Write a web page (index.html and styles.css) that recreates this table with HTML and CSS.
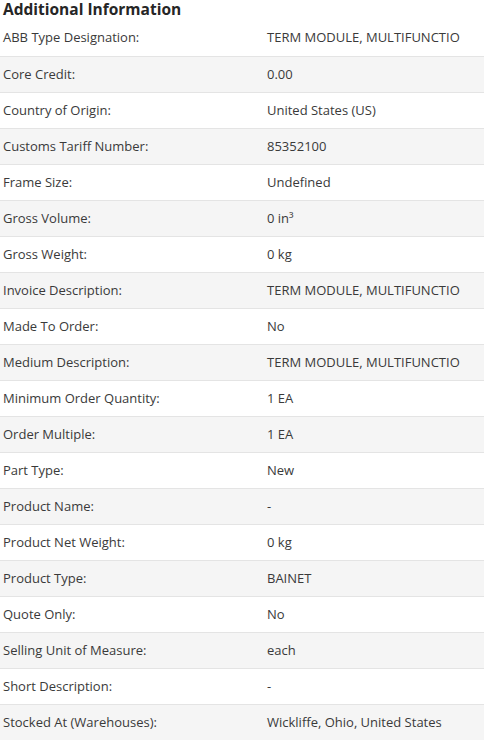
FILE: index.html
```html
<!DOCTYPE html>
<html>
<head>
<meta charset="utf-8">
<link rel="stylesheet" href="styles.css">
</head>
<body>
<div class="info">
  <h2 class="title">Additional Information</h2>
  <div class="table">
    <div class="row"><span class="label">ABB Type Designation:</span><span class="value">TERM MODULE, MULTIFUNCTIO</span></div>
    <div class="row alt"><span class="label">Core Credit:</span><span class="value">0.00</span></div>
    <div class="row"><span class="label">Country of Origin:</span><span class="value">United States (US)</span></div>
    <div class="row alt"><span class="label">Customs Tariff Number:</span><span class="value">85352100</span></div>
    <div class="row"><span class="label">Frame Size:</span><span class="value">Undefined</span></div>
    <div class="row alt"><span class="label">Gross Volume:</span><span class="value">0 in³</span></div>
    <div class="row"><span class="label">Gross Weight:</span><span class="value">0 kg</span></div>
    <div class="row alt"><span class="label">Invoice Description:</span><span class="value">TERM MODULE, MULTIFUNCTIO</span></div>
    <div class="row"><span class="label">Made To Order:</span><span class="value">No</span></div>
    <div class="row alt"><span class="label">Medium Description:</span><span class="value">TERM MODULE, MULTIFUNCTIO</span></div>
    <div class="row"><span class="label">Minimum Order Quantity:</span><span class="value">1 EA</span></div>
    <div class="row alt"><span class="label">Order Multiple:</span><span class="value">1 EA</span></div>
    <div class="row"><span class="label">Part Type:</span><span class="value">New</span></div>
    <div class="row alt"><span class="label">Product Name:</span><span class="value">-</span></div>
    <div class="row"><span class="label">Product Net Weight:</span><span class="value">0 kg</span></div>
    <div class="row alt"><span class="label">Product Type:</span><span class="value">BAINET</span></div>
    <div class="row"><span class="label">Quote Only:</span><span class="value">No</span></div>
    <div class="row alt"><span class="label">Selling Unit of Measure:</span><span class="value">each</span></div>
    <div class="row"><span class="label">Short Description:</span><span class="value">-</span></div>
    <div class="row alt"><span class="label">Stocked At (Warehouses):</span><span class="value">Wickliffe, Ohio, United States</span></div>
  </div>
</div>
</body>
</html>
```
FILE: styles.css
```css
html, body {
  margin: 0;
  padding: 0;
  background: #fff;
}
.info {
  width: 484px;
  font-family: "Open Sans", "Noto Sans", sans-serif;
  color: #333;
}
.title {
  margin: 0;
  padding: 1px 0 0 3px;
  box-sizing: border-box;
  height: 20px;
  line-height: 17px;
  font-size: 15.5px;
  font-weight: 700;
  color: #262626;
}
.table {
  display: flex;
  flex-direction: column;
}
.row {
  display: grid;
  grid-template-columns: 264px 1fr;
  align-items: center;
  height: 36px;
  box-sizing: border-box;
  padding-bottom: 2px;
  border-top: 1px solid #e4e4e4;
  font-size: 13px;
  color: #3a3a3a;
}
.row:first-child {
  border-top: none;
}
.row.alt {
  background: #f5f5f5;
}
.label {
  padding-left: 3px;
}
.value {
  padding-left: 3px;
}
```
